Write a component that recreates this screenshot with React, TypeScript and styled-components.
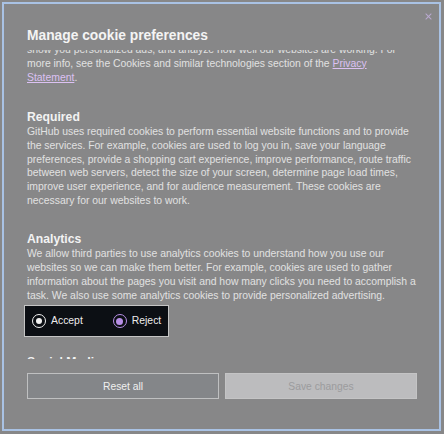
import { useLayoutEffect, useRef } from "react"
import styled, { createGlobalStyle } from "styled-components"

const GlobalStyle = createGlobalStyle`
  html,
  body {
    margin: 0;
    height: 100%;
  }
  body {
    background: #878788;
    font-family: "Liberation Sans", Arial, sans-serif;
    overflow: hidden;
  }
`

const Dialog = styled.div`
  box-sizing: border-box;
  margin: 2px;
  width: 439px;
  height: 429px;
  border: 2px solid #a9c2e4;
  background: #878788;
  display: flex;
  flex-direction: column;
`

const Header = styled.header`
  display: flex;
  align-items: flex-start;
  padding: 0 3px 4px 23px;
`

const Title = styled.h1`
  flex: 1;
  margin: 22px 0 0;
  font-size: 13.8px;
  line-height: 20px;
  font-weight: 700;
  color: #f4f4f4;
`

const CloseButton = styled.button`
  width: 16px;
  height: 16px;
  margin-top: 4px;
  padding: 0;
  border: 0;
  background: transparent;
  display: flex;
  align-items: center;
  justify-content: center;
  cursor: pointer;
`

const Body = styled.div`
  position: relative;
  flex: 1;
  min-height: 0;
  overflow-y: auto;
  scrollbar-width: none;
  padding: 0 21px 0 23px;
`

type SectionProps = {
  $gap?: number
}
const Section = styled.section<SectionProps>`
  margin-top: ${p => p.$gap ?? 24}px;
`

const Heading = styled.h2`
  margin: 0;
  font-size: 12.2px;
  line-height: 16px;
  font-weight: 700;
  color: #f3f3f3;
`

const Text = styled.p`
  margin: 0;
  font-size: 10.4px;
  line-height: 13.7px;
  color: #e1e1e1;

  a {
    color: #dcc1f3;
    text-decoration: underline;
  }
`

const RadioGroup = styled.div`
  display: inline-flex;
  align-items: center;
  gap: 30px;
  margin: 3px 0 0 -3px;
  padding: 8px 7px;
  background: #0c0f14;
  border: 1px solid #c5c5c5;
`

const RadioOption = styled.label`
  display: flex;
  align-items: center;
  gap: 5px;
  font-size: 10.4px;
  line-height: 14px;
  color: #ececec;
`

type RadioMarkProps = {
  $color: string
  $dot: number
}
const RadioMark = styled.span<RadioMarkProps>`
  box-sizing: border-box;
  width: 14px;
  height: 14px;
  border-radius: 50%;
  border: 1.5px solid ${p => p.$color};
  display: flex;
  align-items: center;
  justify-content: center;

  &::after {
    content: "";
    width: ${p => p.$dot}px;
    height: ${p => p.$dot}px;
    border-radius: 50%;
    background: ${p => p.$color};
  }
`

const Footer = styled.footer`
  display: grid;
  grid-template-columns: 1fr 1fr;
  gap: 6px;
  padding: 14px 22px 30px 23px;
`

type ButtonProps = {
  $disabled?: boolean
}
const Button = styled.button<ButtonProps>`
  box-sizing: border-box;
  height: 26px;
  padding: 0;
  font-family: inherit;
  font-size: 10.3px;
  border: 1px solid ${p => (p.$disabled ? "#c4c4c5" : "#bfc0c1")};
  background: ${p => (p.$disabled ? "#bcbcbe" : "#848689")};
  color: ${p => (p.$disabled ? "#9b9b9d" : "#f0f0f0")};
`

function Choice() {
  return (
    <RadioGroup>
      <RadioOption>
        <RadioMark $color="#f2f2f2" $dot={6} />
        Accept
      </RadioOption>
      <RadioOption>
        <RadioMark $color="#b88fe6" $dot={7} />
        Reject
      </RadioOption>
    </RadioGroup>
  )
}

export default function App() {
  const bodyRef = useRef<HTMLDivElement>(null)
  const anchorRef = useRef<HTMLElement>(null)

  // the dialog body is scrolled down a bit, "Required" sits near the top
  useLayoutEffect(() => {
    if (bodyRef.current && anchorRef.current) {
      bodyRef.current.scrollTop = anchorRef.current.offsetTop - 59
    }
  }, [])

  return (
    <>
      <GlobalStyle />
      <Dialog role="dialog" aria-label="Manage cookie preferences">
        <Header>
          <Title>Manage cookie preferences</Title>
          <CloseButton aria-label="Close">
            <svg width="11" height="11" viewBox="0 0 16 16" fill="#b9a9cf">
              <path d="M3.72 3.72a.75.75 0 0 1 1.06 0L8 6.94l3.22-3.22a.749.749 0 0 1 1.275.326.749.749 0 0 1-.215.734L9.06 8l3.22 3.22a.749.749 0 0 1-.326 1.275.749.749 0 0 1-.734-.215L8 9.06l-3.22 3.22a.751.751 0 0 1-1.042-.018.751.751 0 0 1-.018-1.042L6.94 8 3.72 4.78a.75.75 0 0 1 0-1.06Z" />
            </svg>
          </CloseButton>
        </Header>
        <Body ref={bodyRef}>
          <Section $gap={0}>
            <Text>
              Most GitHub websites use cookies. Cookies are small text files
              placed on your device to store data so web servers can use it
              later. GitHub and our third-party partners use cookies to remember
              your preferences and settings, help you sign in,
              <br />
              show you personalized ads, and analyze how well our websites are
              working. For more info, see the Cookies and similar technologies
              section of the <a href="#privacy">Privacy Statement</a>.
            </Text>
          </Section>
          <Section $gap={25} ref={anchorRef}>
            <Heading>Required</Heading>
            <Text>
              GitHub uses required cookies to perform essential website
              functions and to provide the services. For example, cookies are
              used to log you in, save your language preferences, provide a
              shopping cart experience, improve performance, route traffic
              between web servers, detect the size of your screen, determine
              page load times, improve user experience, and for audience
              measurement. These cookies are necessary for our websites to work.
            </Text>
          </Section>
          <Section>
            <Heading>Analytics</Heading>
            <Text>
              We allow third parties to use analytics cookies to understand how
              you use our websites so we can make them better. For example,
              cookies are used to gather information about the pages you visit
              and how many clicks you need to accomplish a task. We also use some
              analytics cookies to provide personalized advertising.
            </Text>
            <Choice />
          </Section>
          <Section $gap={16.5}>
            <Heading>Social Media</Heading>
            <Text>
              GitHub and third parties use social media cookies to show you ads
              and content based on your social media profiles and activity on
              GitHub's websites. This connects your activity on GitHub's websites
              to your social media profiles so the information you see on
              GitHub's websites and on social media will better reflect your
              interests.
            </Text>
          </Section>
          <Section>
            <Heading>Advertising</Heading>
            <Text>
              In addition, GitHub and third parties use advertising cookies to
              show you new ads based on ads you've already seen. Cookies also
              track ad performance and measure how effective ads are.
            </Text>
          </Section>
        </Body>
        <Footer>
          <Button type="button">Reset all</Button>
          <Button type="button" $disabled>
            Save changes
          </Button>
        </Footer>
      </Dialog>
    </>
  )
}
